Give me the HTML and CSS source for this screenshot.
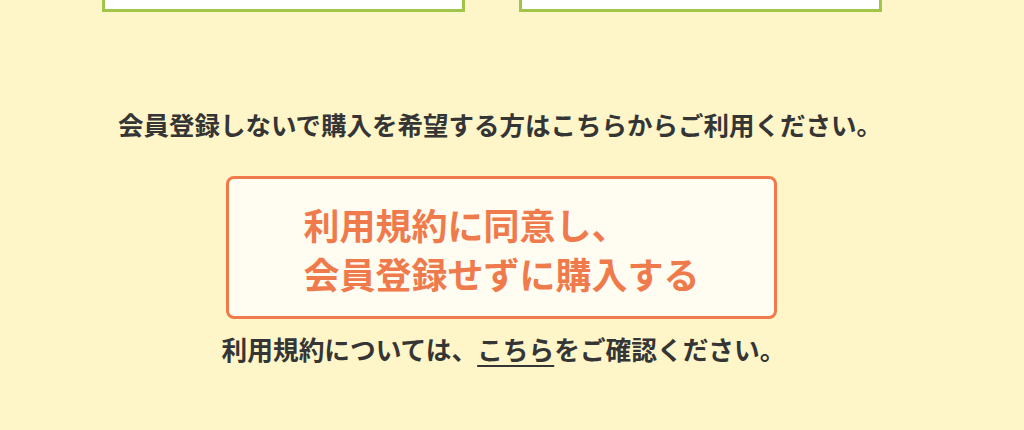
FILE: index.html
```html
<!DOCTYPE html>
<html lang="ja">
<head>
<meta charset="utf-8">
<link rel="stylesheet" href="styles.css">
</head>
<body>
<div class="page">
  <div class="boxes">
    <div class="box"></div>
    <div class="box"></div>
  </div>
  <p class="lead">会員登録しないで購入を希望する方はこちらからご利用ください。</p>
  <div class="guest">
    <a class="guest-btn" href="#"><span class="guest-label">利用規約に同意し、<br>会員登録せずに購入する</span></a>
    <p class="terms">利用規約については、<a class="terms-link" href="#">こちら</a>をご確認ください。</p>
  </div>
</div>
</body>
</html>
```
FILE: styles.css
```css
html, body {
  margin: 0;
  padding: 0;
  background: #fef6c8;
}
body {
  font-family: "Noto Sans CJK JP", "Noto Sans", sans-serif;
  color: #353535;
  width: 1024px;
  height: 430px;
  overflow: hidden;
}
.page {
  width: 1000px;
  display: flex;
  flex-direction: column;
  align-items: center;
}
.boxes {
  align-self: stretch;
  display: flex;
  gap: 54px;
  padding-left: 102px;
}
.box {
  width: 363px;
  height: 12px;
  box-sizing: border-box;
  background: #ffffff;
  border: 3px solid #9fc54b;
  border-top: none;
}
.lead {
  margin: 93px 0 0;
  font-size: 25.5px;
  line-height: 37px;
  font-weight: bold;
  white-space: nowrap;
}
.guest {
  margin-top: 34px;
  margin-left: 3px;
  display: flex;
  flex-direction: column;
  align-items: center;
}
.guest-btn {
  width: 551px;
  height: 143px;
  box-sizing: border-box;
  border: 3px solid #f07a4b;
  border-radius: 8px;
  background: #fffcf1;
  display: flex;
  align-items: center;
  justify-content: center;
  text-decoration: none;
  padding-top: 2px;
}
.guest-label {
  display: inline-block;
  text-align: left;
  color: #ef7b4c;
  font-size: 36px;
  line-height: 49px;
  font-weight: bold;
  white-space: nowrap;
}
.terms {
  margin: 11px 0 0 4px;
  font-size: 25.7px;
  line-height: 37px;
  font-weight: bold;
  white-space: nowrap;
}
.terms-link {
  color: #353535;
  text-decoration: underline;
  text-underline-offset: 5px;
  text-decoration-thickness: 2px;
}
```
